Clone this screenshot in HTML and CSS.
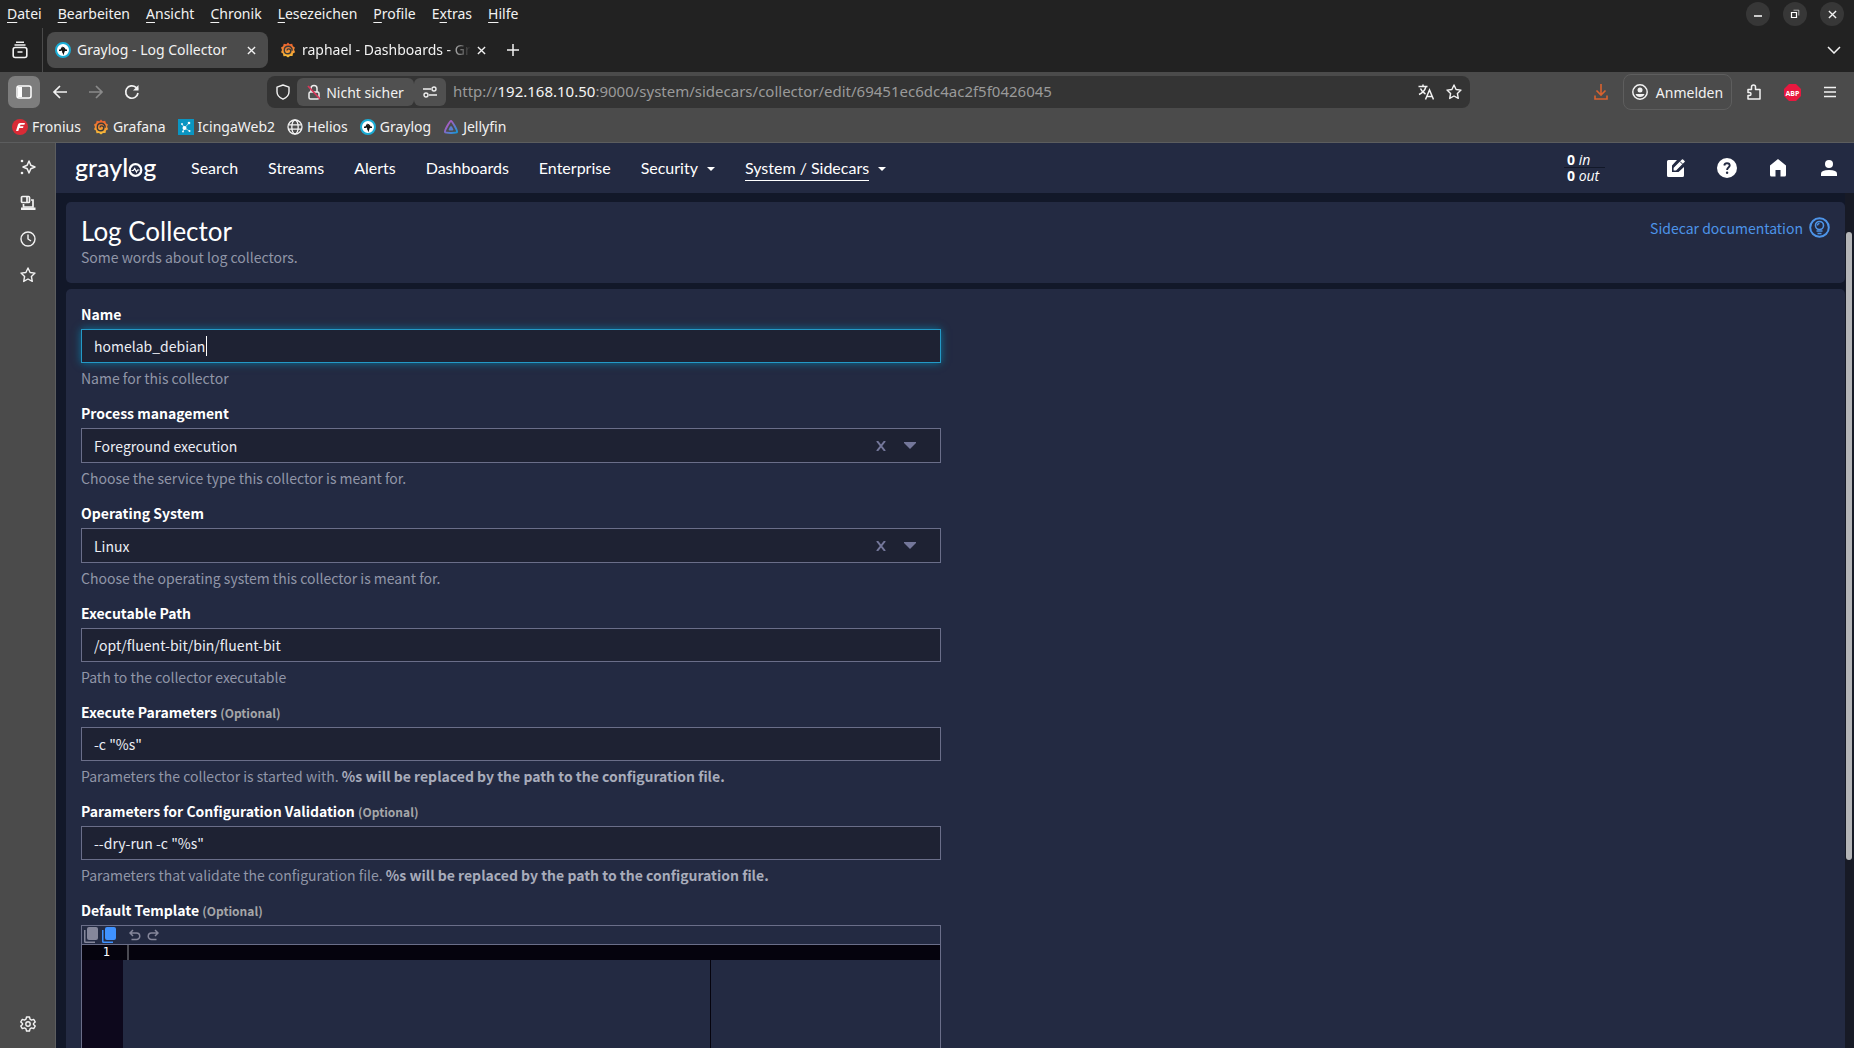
FILE: index.html
```html
<!DOCTYPE html>
<html lang="de">
<head>
  <meta charset="UTF-8" />
  <meta name="viewport" content="width=device-width, initial-scale=1" />
  <title>Graylog - Log Collector</title>
  <link rel="stylesheet" href="styles.css">
</head>
<body>
  <!-- shared icons -->
  <svg class="defs" width="0" height="0" aria-hidden="true">
    <symbol id="i-graylog" viewBox="0 0 16 16">
      <circle cx="8" cy="8" r="7" fill="#fff" stroke="#1badd6" stroke-width="2" />
      <path d="M4 8.300h1.800L7 6.200l1.400 4.500L9.600 7.200l.6 1.100H12" fill="none" stroke="#111" stroke-width="1.600" />
      <path d="M8.200 5v6" stroke="#111" stroke-width="1.400" />
    </symbol>
    <symbol id="i-grafana" viewBox="0 0 16 16">
      <linearGradient id="gf" x1="0" y1="0" x2="0" y2="1">
        <stop offset="0" stop-color="#ee5a2e" />
        <stop offset="1" stop-color="#f6c23a" />
      </linearGradient>
      <path d="M8 .6l1.600 1.600 2.600-.4.7 2.400 2 1.300-.8 2.200 1 2.500-2.100 1.200-.5 2.600-2.500.1L8 15.600l-2-1.500-2.500.1-.6-2.600L1 10.300 2 7.900 1 5.500l2.100-1.300.6-2.400 2.700.4z" fill="url(#gf)" />
      <path d="M12.200 8.600c.1-2.600-1.600-4.300-3.900-4.300-2.300 0-4 1.700-4 3.900s1.700 3.600 3.600 3.600c1.800 0 2.900-1.300 2.900-2.700 0-1.300-.9-2.200-2.100-2.200-1 0-1.700.7-1.700 1.500" fill="none" stroke="#3a3a3a" stroke-width="1.400" />
    </symbol>
    <symbol id="i-star" viewBox="0 0 16 16">
      <path d="M8 1l2.100 4.500 4.900.6-3.600 3.400.9 4.900L8 12l-4.300 2.400.9-4.900L1 6.100l4.900-.6z" fill="none" stroke="currentColor" stroke-width="1.400" stroke-linejoin="round" />
    </symbol>
    <symbol id="i-close" viewBox="0 0 10 10">
      <path d="M1 1l8 8M9 1L1 9" stroke="currentColor" stroke-width="1.500" />
    </symbol>
  </svg>

  <div class="browser">
    <header>
      <div class="menubar">
        <nav class="menus">
          <a href="#"><u>D</u>atei</a>
          <a href="#"><u>B</u>earbeiten</a>
          <a href="#"><u>A</u>nsicht</a>
          <a href="#"><u>C</u>hronik</a>
          <a href="#"><u>L</u>esezeichen</a>
          <a href="#"><u>P</u>rofile</a>
          <a href="#">E<u>x</u>tras</a>
          <a href="#"><u>H</u>ilfe</a>
        </nav>
        <div class="window-buttons">
          <button aria-label="Minimieren"><svg width="10" height="10"><path d="M1 7h8" stroke="#fff" stroke-width="1.500" /></svg></button>
          <button aria-label="Wiederherstellen"><svg width="10" height="10" fill="none" stroke="#fff"><path d="M1.500 3.500h5v5h-5z" stroke-width="1.200" /><path d="M3.500 1.200h5.300v5.300" opacity=".6" /></svg></button>
          <button aria-label="Schließen"><svg width="9" height="9"><use href="#i-close" /></svg></button>
        </div>
      </div>

      <div class="tabstrip">
        <button class="recent" aria-label="Letzte Tabs"><svg width="16" height="18" viewBox="0 0 16 18" fill="none" stroke="currentColor" stroke-width="1.600"><path d="M4 1.200h8M2.500 4h11M5.500 11h5" /><rect x="1.200" y="6.500" width="13.600" height="10" rx="2" /></svg></button>
        <div class="tab active">
          <svg width="16" height="16"><use href="#i-graylog" /></svg>
          <span class="tab-title">Graylog - Log Collector</span>
          <button aria-label="Tab schließen"><svg width="9" height="9"><use href="#i-close" /></svg></button>
        </div>
        <div class="tab">
          <svg width="16" height="16"><use href="#i-grafana" /></svg>
          <span class="tab-title fade">raphael - Dashboards - Gr</span>
          <button aria-label="Tab schließen"><svg width="9" height="9"><use href="#i-close" /></svg></button>
        </div>
        <button class="new-tab" aria-label="Neuer Tab"><svg width="14" height="14"><path d="M7 1v12M1 7h12" stroke="currentColor" stroke-width="1.500" /></svg></button>
        <button class="all-tabs" aria-label="Alle Tabs"><svg width="14" height="8"><path d="M1 1l6 6 6-6" fill="none" stroke="currentColor" stroke-width="1.500" /></svg></button>
      </div>

      <div class="toolbar">
        <div class="nav-buttons">
          <button class="pressed" aria-label="Seitenleiste"><svg width="16" height="14" fill="none" stroke="#fff" stroke-width="1.500"><rect x="1" y="1" width="14" height="12" rx="2" /><path d="M2 2h4v10H2z" fill="#fff" stroke="none" /></svg></button>
          <button aria-label="Zurück"><svg width="16" height="14" fill="none" stroke="currentColor" stroke-width="1.700"><path d="M15 7H2M8 1L2 7l6 6" /></svg></button>
          <button class="dim" aria-label="Vor"><svg width="16" height="14" fill="none" stroke="currentColor" stroke-width="1.700"><path d="M1 7h13M8 1l6 6-6 6" /></svg></button>
          <button aria-label="Neu laden"><svg width="16" height="16" fill="none" stroke="currentColor" stroke-width="1.700"><path d="M14 9A6.200 6.200 0 1 1 12 3.400L14 5.500" /><path d="M14.500 1v5.500H9z" fill="currentColor" stroke="none" /></svg></button>
        </div>
        <div class="urlbar">
          <svg class="shield" width="14" height="16" fill="none" stroke="currentColor" stroke-width="1.400"><path d="M7 1l6 2.200v4.500c0 3.300-2.500 6-6 7.500-3.500-1.500-6-4.200-6-7.500V3.200z" stroke-linejoin="round" /></svg>
          <button class="chip"><svg width="14" height="16" fill="none" stroke="#eee" stroke-width="1.500"><path d="M4 8V4.500a3 3 0 0 1 6 0V8" /><rect x="2" y="8" width="10" height="7" rx="1.500" /><path d="M1 2l12 13" stroke="#d8375a" stroke-width="1.800" /></svg>Nicht sicher</button>
          <button class="chip perms" aria-label="Berechtigungen"><svg width="14" height="12" fill="none" stroke="#eee" stroke-width="1.400"><path d="M0 3h8M6 9h8" /><circle cx="11" cy="3" r="2" /><circle cx="3" cy="9" r="2" /></svg></button>
          <div class="url">http://<b>192.168.10.50</b>:9000/system/sidecars/collector/edit/69451ec6dc4ac2f5f0426045</div>
          <button aria-label="Übersetzen"><svg width="16" height="16" fill="none" stroke="currentColor" stroke-width="1.500"><path d="M.5 2.500h9M5 .5v2M8 2.500C7 6 4.500 9 1 10.500M2.500 4.500C3.500 7 5 8.500 7.500 10M7.500 15.500L11.500 6l4 9.500M9 12.500h5" /></svg></button>
          <button aria-label="Lesezeichen setzen"><svg width="16" height="16"><use href="#i-star" /></svg></button>
        </div>
        <div class="tools">
          <button class="orange" aria-label="Downloads"><svg width="14" height="16" fill="none" stroke="currentColor" stroke-width="1.600"><path d="M7 0v11M2.500 6.500L7 11l4.500-4.500M1 11.500V15h12v-3.500" /></svg></button>
          <button class="signin"><svg width="16" height="16"><circle cx="8" cy="8" r="7.200" fill="none" stroke="currentColor" stroke-width="1.500" /><circle cx="8" cy="6" r="2.500" fill="currentColor" /><path d="M3.500 10h9c-.5 1.800-2.300 3-4.500 3s-4-1.200-4.500-3z" fill="currentColor" /></svg>Anmelden</button>
          <button aria-label="Erweiterungen"><svg width="14" height="16" fill="none" stroke="currentColor" stroke-width="1.500" stroke-linejoin="round"><path d="M1 5.500h3.500V3a2 2 0 0 1 4 0v2.500H13V15H1v-3.500h1.500a1.500 1.500 0 0 0 0-3H1z" /></svg></button>
          <button aria-label="Adblock Plus"><svg width="17" height="17" viewBox="0 0 17 17"><path d="M5 0h7l5 5v7l-5 5H5l-5-5V5z" fill="#e8183f" /><text x="8.500" y="11.500" class="abp">ABP</text></svg></button>
          <button aria-label="Menü"><svg width="12" height="12" stroke="currentColor" stroke-width="1.400"><path d="M0 1.500h12M0 6h12M0 10.500h12" /></svg></button>
        </div>
      </div>

      <nav class="bookmarks">
        <a href="#"><svg width="16" height="16"><circle cx="8" cy="8" r="8" fill="#d92b36" /><path d="M4 12l2-6.500Q6.500 4 8 4h5l-.6 1.700H8.500L8 7.200h3.500L11 9H7.300l-1 3z" fill="#fff" /></svg>Fronius</a>
        <a href="#"><svg width="16" height="16"><use href="#i-grafana" /></svg>Grafana</a>
        <a href="#"><svg width="16" height="16"><path d="M0 0h16v16H0z" fill="#0a95c2" /><path d="M6.500 9L11 4M6.500 9l5 3M6.500 9L4 5M6.500 9L5 12.500" stroke="#fff" stroke-width=".6" /><g fill="#fff"><circle cx="6.500" cy="9" r="2" /><circle cx="11" cy="4" r="1.300" /><circle cx="11.500" cy="12" r="1" /><circle cx="4" cy="5" r=".9" /><circle cx="5" cy="12.500" r=".9" /></g></svg>IcingaWeb2</a>
        <a href="#"><svg width="16" height="16" fill="none" stroke="currentColor" stroke-width="1.300"><circle cx="8" cy="8" r="7" /><ellipse cx="8" cy="8" rx="3.200" ry="7" /><path d="M1.500 5.800h13M1.500 10.200h13" /></svg>Helios</a>
        <a href="#"><svg width="16" height="16"><use href="#i-graylog" /></svg>Graylog</a>
        <a href="#"><svg width="16" height="16"><linearGradient id="jf" x1="0" y1="0" x2="1" y2="1"><stop offset=".3" stop-color="#a05fc4" /><stop offset="1" stop-color="#1498d8" /></linearGradient><path d="M8 2c1.200 0 6.600 9.800 6 11s-11.400 1.200-12 0S6.800 2 8 2z" fill="none" stroke="url(#jf)" stroke-width="2" /><path d="M8 7c.7 0 2.600 3.300 2.300 4s-4.300.7-4.600 0S7.300 7 8 7z" fill="#5b7fd0" /></svg>Jellyfin</a>
      </nav>
    </header>

    <div class="body">
      <aside class="sidebar">
        <button aria-label="KI-Chat"><svg width="16" height="16" fill="none" stroke="currentColor" stroke-width="1.500" stroke-linejoin="round"><path d="M9 2l1.800 4.200L15 8l-4.200 1.800L9 14l-1.800-4.200L3 8l4.200-1.800z" /><circle cx="2" cy="2" r="1.300" fill="currentColor" stroke="none" /><circle cx="2" cy="14" r="1.300" fill="currentColor" stroke="none" /></svg></button>
        <button aria-label="Synchronisierte Tabs"><svg width="16" height="16" fill="none" stroke="currentColor" stroke-width="1.700"><rect x="1.500" y="1.500" width="8" height="6" rx="1" /><path d="M7 2v5.500M3.500 9v3h9.500V5h-2" /><path d="M1 12.500h14.500V15H1z" fill="currentColor" stroke="none" /></svg></button>
        <button aria-label="Chronik"><svg width="16" height="16" fill="none" stroke="currentColor" stroke-width="1.400"><circle cx="8" cy="8" r="7" /><path d="M8 3.500V8l3 2" /></svg></button>
        <button aria-label="Lesezeichen"><svg width="16" height="16"><use href="#i-star" /></svg></button>
        <button class="settings" aria-label="Anpassen"><svg width="16" height="16" fill="none" stroke="currentColor" stroke-width="1.400" stroke-linejoin="round"><path d="M6.500 1h3l.5 2.200 1.500.9 2.200-.7 1.500 2.500L13.500 7.500v1l1.700 1.600-1.500 2.500-2.200-.7-1.500.9-.5 2.200h-3L6 12.800l-1.500-.9-2.200.7-1.500-2.500L2.500 8.500v-1L.8 5.900l1.500-2.500 2.200.7L6 3.200z" /><circle cx="8" cy="8" r="2.200" /></svg></button>
      </aside>

      <div class="page">
        <div class="navbar">
          <a class="logo" href="#" aria-label="graylog">grayl<svg width="15" height="14" viewBox="0 0 15 14" fill="none" stroke="#fff"><circle cx="7.500" cy="7" r="5.800" stroke-width="2.200" /><path d="M3.500 7.500h1.800l1.400-2 1.800 3.500 1-2h2" stroke-width="1.200" /></svg>g</a>
          <nav class="links">
            <a href="#">Search</a>
            <a href="#">Streams</a>
            <a href="#">Alerts</a>
            <a href="#">Dashboards</a>
            <a href="#">Enterprise</a>
            <a href="#" class="drop">Security</a>
            <a href="#" class="drop current"><span>System / Sidecars</span></a>
          </nav>
          <div class="throughput">
            <div><b>0</b> <i>in</i></div>
            <div><b>0</b> <i>out</i></div>
          </div>
          <div class="nav-icons">
            <a href="#" aria-label="Scratchpad"><svg width="20" height="20"><path d="M2.500 2H11L6 7.500V14h6.500L18 9v8.500q0 1.500-1.500 1.500h-14Q1 19 1 17.500v-14Q1 2 2.500 2z" fill="#fff" /><path d="M7 13V9.500L15.500 1q1-1 2 0L19 2.500q1 1 0 2L10.500 13z" fill="#fff" stroke="#232a42" stroke-width="1.200" /><path d="M14 3.500l3 3" stroke="#232a42" /></svg></a>
            <a href="#" aria-label="Help"><svg width="20" height="20"><circle cx="10" cy="10" r="10" fill="#fff" /><path d="M7.300 7.500C7.500 6 8.600 5.200 10 5.200s2.700.9 2.700 2.400c0 1.900-2.600 2.100-2.600 4.300" fill="none" stroke="#232a42" stroke-width="1.900" /><circle cx="10.100" cy="14.800" r="1.200" fill="#232a42" /></svg></a>
            <a href="#" aria-label="Welcome"><svg width="16" height="18"><path d="M8 0l8 6.500V16q0 1.500-1.500 1.500H10.500V11h-5v6.500H1.500Q0 17.500 0 16V6.500z" fill="#fff" /></svg></a>
            <a href="#" aria-label="User"><svg width="16" height="16"><circle cx="8" cy="4" r="4" fill="#fff" /><path d="M0 16v-2.500Q0 10 8 10t8 3.500V16z" fill="#fff" /></svg></a>
          </div>
        </div>

        <main class="content">
          <section class="card title-card">
            <div>
              <h1>Log Collector</h1>
              <p>Some words about log collectors.</p>
            </div>
            <a class="doc-link" href="#">Sidecar documentation
              <svg width="21" height="21" fill="none" stroke="currentColor"><circle cx="10.500" cy="10.500" r="9.300" stroke-width="2" /><circle cx="10.500" cy="8.500" r="4" stroke-width="1.600" /><path d="M8.500 8.500q0-2 2-2M7.500 14h6M8.500 16.500h4" stroke-width="1.300" /></svg>
            </a>
          </section>

          <section class="card form-card">
            <form class="collector">
              <div class="group">
                <label for="name">Name</label>
                <div class="control">
                  <input class="focused" type="text" id="name" value="homelab_debian" />
                  <span class="caret"></span>
                </div>
                <p>Name for this collector</p>
              </div>
              <div class="group">
                <label for="service">Process management</label>
                <div class="control">
                  <select id="service"><option>Foreground execution</option><option>Windows service</option></select>
                  <span class="indicators"><svg width="10" height="10" fill="none"><path d="M1 0l8 10M9 0L1 10" stroke="currentColor" stroke-width="2" /></svg><svg width="12" height="7"><path d="M0 0h12v1L6 7 0 1z" fill="currentColor" /></svg></span>
                </div>
                <p>Choose the service type this collector is meant for.</p>
              </div>
              <div class="group">
                <label for="os">Operating System</label>
                <div class="control">
                  <select id="os"><option>Linux</option><option>Windows</option></select>
                  <span class="indicators"><svg width="10" height="10" fill="none"><path d="M1 0l8 10M9 0L1 10" stroke="currentColor" stroke-width="2" /></svg><svg width="12" height="7"><path d="M0 0h12v1L6 7 0 1z" fill="currentColor" /></svg></span>
                </div>
                <p>Choose the operating system this collector is meant for.</p>
              </div>
              <div class="group">
                <label for="path">Executable Path</label>
                <input type="text" id="path" value="/opt/fluent-bit/bin/fluent-bit" />
                <p>Path to the collector executable</p>
              </div>
              <div class="group">
                <label for="params">Execute Parameters <small>(Optional)</small></label>
                <input type="text" id="params" value='-c "%s"' />
                <p>Parameters the collector is started with. <b>%s will be replaced by the path to the configuration file.</b></p>
              </div>
              <div class="group">
                <label for="validation">Parameters for Configuration Validation <small>(Optional)</small></label>
                <input type="text" id="validation" value='--dry-run -c "%s"' />
                <p>Parameters that validate the configuration file. <b>%s will be replaced by the path to the configuration file.</b></p>
              </div>
              <div class="group">
                <label for="template">Default Template <small>(Optional)</small></label>
                <div class="editor">
                  <div class="editor-bar">
                    <button type="button" aria-label="Copy"><svg width="14" height="16" fill="currentColor"><rect x="3" y="0" width="11" height="13" rx="2" /><path d="M0 3h1.500v11.500H11V16H1.500Q0 16 0 14.500z" /></svg></button>
                    <button type="button" class="blue" aria-label="Paste"><svg width="14" height="16" fill="currentColor"><rect x="3" y="0" width="11" height="13" rx="2" /><path d="M0 3h1.500v11.500H11V16H1.500Q0 16 0 14.500z" /></svg></button>
                    <button type="button" class="undo" aria-label="Undo"><svg width="12" height="12" fill="none" stroke="currentColor" stroke-width="1.500"><path d="M4 1L1 4l3 3M1 4h6.500a3.200 3.200 0 0 1 0 6.500H2.500" /></svg></button>
                    <button type="button" aria-label="Redo"><svg width="12" height="12" fill="none" stroke="currentColor" stroke-width="1.500"><path d="M8 1l3 3-3 3M11 4H4.500a3.200 3.200 0 0 0 0 6.500h5" /></svg></button>
                  </div>
                  <div class="editor-body">
                    <div class="gutter"><div>1</div></div>
                    <div class="code"><textarea id="template" spellcheck="false"></textarea></div>
                  </div>
                </div>
              </div>
            </form>
          </section>
        </main>
        <div class="scrollbar"><div class="thumb"></div></div>
      </div>
    </div>
  </div>
</body>
</html>
```

FILE: styles.css
```css
* {
  margin: 0;
  padding: 0;
  box-sizing: border-box;
}

body {
  font-family: "Noto Sans", sans-serif;
  font-size: 14px;
  background: #222222;
  color: #f2f2f2;
}

a {
  color: inherit;
  text-decoration: none;
}

button {
  display: flex;
  align-items: center;
  justify-content: center;
  border: none;
  background: none;
  color: inherit;
  font: inherit;
  cursor: pointer;
}

svg {
  flex: none;
}

.defs {
  position: absolute;
}

.browser {
  display: flex;
  flex-direction: column;
  height: 100vh;
  overflow: hidden;
}

/* menu bar */
.menubar {
  display: flex;
  justify-content: space-between;
  height: 28px;
  padding: 0 10px 0 7px;
}

.menus {
  display: flex;
  align-items: center;
  gap: 16px;
  padding-bottom: 2px;
}

.menus u {
  text-underline-offset: 3px;
}

.window-buttons {
  display: flex;
  align-items: center;
  gap: 13px;
}

.window-buttons button {
  width: 24px;
  height: 24px;
  border-radius: 50%;
  background: #373737;
}

/* tabs */
.tabstrip {
  display: flex;
  align-items: center;
  height: 44px;
}

.recent {
  width: 43px;
  height: 44px;
  padding-right: 2px;
  border-right: 1px solid #4b4b4b;
}

.tab {
  display: flex;
  align-items: center;
  gap: 6px;
  width: 221px;
  height: 36px;
  margin-left: 4px;
  padding: 0 12px 0 8px;
  border-radius: 8px;
}

.tab.active {
  background: #4b4b4b;
}

.tab-title {
  flex: 1;
  padding-bottom: 2px;
  white-space: nowrap;
}

.tab-title.fade {
  -webkit-mask-image: linear-gradient(to left, transparent, #000 24px);
  mask-image: linear-gradient(to left, transparent, #000 24px);
}

.new-tab {
  width: 32px;
  height: 32px;
  margin-left: 4px;
}

.all-tabs {
  width: 40px;
  height: 32px;
  margin-left: auto;
}

/* toolbar */
.toolbar {
  display: flex;
  align-items: center;
  height: 40px;
  padding: 0 8px;
  background: #4b4b4b;
}

.nav-buttons {
  display: flex;
  gap: 4px;
  width: 259px;
}

.nav-buttons button {
  width: 32px;
  height: 32px;
  border-radius: 7px;
}

.nav-buttons .pressed {
  background: #7d7d7d;
}

.nav-buttons .dim {
  color: #8a8a8a;
}

.urlbar {
  display: flex;
  align-items: center;
  flex: 1;
  height: 32px;
  padding-right: 2px;
  border-radius: 8px;
  background: #343434;
}

.urlbar button {
  width: 28px;
  height: 28px;
}

.shield {
  margin: 0 7px 0 9px;
}

.urlbar .chip {
  gap: 5px;
  width: 117px;
  border-radius: 6px;
  background: #505050;
}

.urlbar .perms {
  width: 32px;
}

.url {
  flex: 1;
  padding: 0 0 2px 7px;
  color: #9a9a9a;
  font-size: 15px;
  white-space: nowrap;
}

.url b {
  color: #f5f5f5;
  font-weight: 400;
}

.tools {
  display: flex;
  justify-content: flex-end;
  align-items: center;
  gap: 6px;
  width: 376px;
}

.tools button {
  width: 32px;
  height: 32px;
}

.tools .signin {
  gap: 8px;
  width: 109px;
  height: 36px;
  border: 1px solid #5e5e5e;
  border-radius: 8px;
}

.tools .orange {
  color: #d9622f;
}

.abp {
  font: 700 7px "Open Sans", sans-serif;
  fill: #fff;
  text-anchor: middle;
}

.bookmarks {
  display: flex;
  align-items: center;
  gap: 12px;
  height: 31px;
  padding: 0 0 1px 12px;
  border-bottom: 1px solid #5c5d5e;
  background: #4b4b4b;
}

.bookmarks a {
  display: flex;
  align-items: center;
  gap: 4px;
}

.body {
  display: flex;
  flex: 1;
  min-height: 0;
}

.sidebar {
  display: flex;
  flex-direction: column;
  gap: 4px;
  width: 56px;
  padding: 8px 11px 8px 12px;
  border-right: 1px solid #5c5d5e;
  background: #4b4b4b;
}

.sidebar button {
  width: 32px;
  height: 32px;
}

.sidebar .settings {
  margin-top: auto;
}

/* graylog */
.page {
  position: relative;
  display: flex;
  flex: 1;
  flex-direction: column;
  min-width: 0;
  background: #121829;
  color: #fff;
  font-family: "Noto Sans CJK SC", "Open Sans", sans-serif;
  font-size: 14px;
  line-height: 20px;
}

.navbar {
  display: flex;
  align-items: center;
  flex: none;
  height: 50px;
  padding: 0 15px 0 19px;
  background: #232a42;
  font-family: Lato, sans-serif;
  font-size: 16px;
}

.logo {
  display: flex;
  align-items: baseline;
  width: 116px;
  padding-bottom: 2px;
  font: 500 25px Lato, sans-serif;
}

.links {
  display: flex;
  flex: 1;
  gap: 30px;
}

.links .drop::after {
  content: "";
  display: inline-block;
  margin-left: 9px;
  border: 4px solid transparent;
  border-top-color: #fff;
  border-bottom: none;
  vertical-align: 3px;
}

.current span {
  padding-bottom: 3px;
  border-bottom: 1px solid #fff;
}

.throughput {
  width: 41px;
  margin-right: 61px;
  padding-bottom: 2px;
  font: 14px "Open Sans", sans-serif;
  line-height: 15px;
}

.throughput div {
  padding-left: 3px;
  white-space: nowrap;
}

.throughput div + div {
  border-top: 1px solid #121829;
}

.nav-icons {
  display: flex;
  align-items: center;
  gap: 31px;
}

.nav-icons a {
  display: flex;
  justify-content: center;
  width: 20px;
}

.content {
  display: flex;
  flex: 1;
  flex-direction: column;
  gap: 6px;
  min-height: 0;
  padding: 9px 9px 0 10px;
  overflow: hidden;
}

.card {
  flex: none;
  border-radius: 5px;
  background: #232a42;
}

.title-card {
  display: flex;
  justify-content: space-between;
  align-items: flex-start;
  height: 81px;
  padding: 15px;
}

h1 {
  font: 400 26px Lato, sans-serif;
  line-height: 28px;
}

.title-card p,
.group p {
  color: #9196a8;
}

.title-card p {
  margin-top: 2px;
}

.doc-link {
  display: flex;
  align-items: center;
  gap: 6px;
  color: #4d94e8;
}

.form-card {
  padding: 15px;
}

.collector {
  width: calc(50% - 15px);
}

.group {
  margin-bottom: 15px;
}

.group label {
  display: block;
  margin-bottom: 5px;
  font-weight: 700;
}

.group small {
  color: #a5a6a8;
  font-size: 12px;
  line-height: 1;
}

.group p {
  margin-top: 5px;
}

.group p b {
  color: #a8acbb;
}

.control {
  position: relative;
}

.collector input,
.collector select {
  display: block;
  width: 100%;
  height: 34px;
  padding: 0 12px;
  border: 1px solid #6a6e89;
  border-radius: 0;
  outline: none;
  appearance: none;
  background: #1e2233;
  color: #eceef5;
  font: inherit;
}

.collector select {
  height: 35px;
}

.collector .focused {
  border-color: #2499c6;
  box-shadow: 0 0 8px #0b7399;
}

.caret {
  position: absolute;
  top: 7px;
  left: 125px;
  width: 1px;
  height: 20px;
  background: #fff;
}

.indicators {
  position: absolute;
  top: 0;
  right: 25px;
  display: flex;
  align-items: center;
  gap: 18px;
  height: 35px;
  color: #74779a;
  pointer-events: none;
}

/* template editor */
.editor {
  border: 1px solid #6a6e89;
}

.editor-bar {
  display: flex;
  align-items: center;
  gap: 4px;
  height: 19px;
  padding-left: 2px;
  border-bottom: 1px solid #6a6e89;
  color: #85879b;
}

.editor-bar .blue {
  color: #3f92ff;
}

.editor-bar .undo {
  margin: 0 2px 0 9px;
}

.editor-body {
  display: flex;
  height: 400px;
  font: 12px "DejaVu Sans Mono", monospace;
  line-height: 15px;
}

.gutter {
  width: 41px;
  background: #0d081c;
}

.gutter div {
  padding-right: 13px;
  background: #05030d;
  text-align: right;
}

.code {
  position: relative;
  flex: 1;
  background: linear-gradient(#05030d 15px, #232a42 15px);
}

/* print margin */
.code::after {
  content: "";
  position: absolute;
  top: 15px;
  bottom: 0;
  left: 587px;
  width: 1px;
  background: #05030d;
}

.code textarea {
  display: block;
  width: 100%;
  height: 100%;
  padding-left: 4px;
  border: none;
  outline: none;
  resize: none;
  background: linear-gradient(#4a4a52, #4a4a52) 4px 0 / 2px 15px no-repeat;
  color: #fff;
  font: inherit;
}

.scrollbar {
  position: absolute;
  top: 50px;
  right: 0;
  bottom: 0;
  width: 9px;
  background: #171a26;
}

.thumb {
  width: 6px;
  height: calc(100% - 227px);
  margin: 39px 0 0 1px;
  border-radius: 3px;
  background: #b4b5b8;
}
```
